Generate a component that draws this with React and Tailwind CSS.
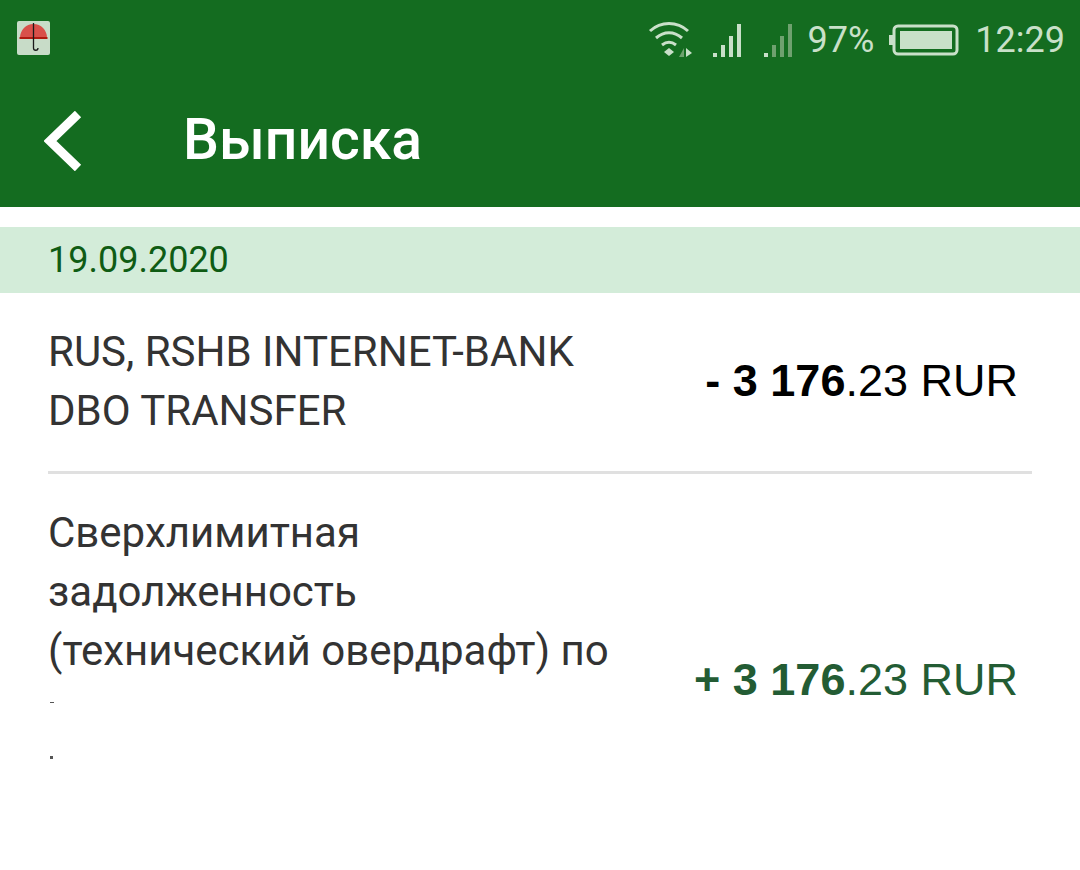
const Umbrella = () => (
  <svg width="33" height="34" viewBox="0 0 33 34" className="rounded-[2px] bg-[#c8dcc8]">
    <path d="M3 17 C3 9 9 3 16.5 3 C24 3 30 9 30 17 Z" fill="#d9504a" />
    <path d="M2.5 17 H30.5" stroke="#b01a10" strokeWidth="2" />
    <path d="M16.5 2 V27 C16.5 30 21 30 21 27" stroke="#1a1a1a" strokeWidth="1.3" fill="none" />
  </svg>
);

const Wifi = () => (
  <svg width="46" height="38" viewBox="0 0 46 38" fill="none" stroke="#c9e0c9" strokeWidth="3">
    <path d="M2 10 C13 0 29 0 40 10" />
    <path d="M8 17 C16 10 26 10 34 17" />
    <path d="M14 24 C19 20 23 20 28 24" />
    <path d="M16 31 L21 27 L26 31 L21 35 Z" fill="#c9e0c9" stroke="none" />
    <path d="M36 27 V36 L31 36 Z" fill="#6fa16f" stroke="none" />
    <path d="M38 27 V36 L44 32 Z" fill="#c9e0c9" stroke="none" />
  </svg>
);

const Signal = ({ dim }) => (
  <svg width="28" height="34" viewBox="0 0 28 34">
    <rect x="0" y="30" width="4" height="4" fill="#c9e0c9" />
    <rect x="8" y="22" width="4" height="12" fill={dim ? "#6fa16f" : "#c9e0c9"} />
    <rect x="16" y="13" width="4" height="21" fill={dim ? "#6fa16f" : "#c9e0c9"} />
    <rect x="24" y="1" width="4" height="33" fill={dim ? "#6fa16f" : "#c9e0c9"} />
  </svg>
);

const Battery = () => (
  <svg width="70" height="32" viewBox="0 0 70 32">
    <rect x="0" y="11" width="4" height="10" fill="#c9e0c9" />
    <rect x="5" y="2" width="63" height="28" rx="4" fill="none" stroke="#c9e0c9" strokeWidth="3" />
    <rect x="11" y="7" width="52" height="18" fill="#c9e0c9" />
  </svg>
);

function App() {
  return (
    <div className="w-[1080px] h-[870px] bg-white font-['Roboto',sans-serif] overflow-hidden">
      <header className="h-[207px] bg-[#146c20]">
        <div className="h-[76px] flex items-center pl-[17px] pr-[15px]">
          <Umbrella />
          <div className="ml-auto flex items-center text-[#c9e0c9] text-[36px] pt-[3px]">
            <Wifi />
            <div className="ml-[19px]"><Signal /></div>
            <div className="ml-[23px]"><Signal dim /></div>
            <span className="ml-[16px]">97%</span>
            <div className="ml-[15px]"><Battery /></div>
            <span className="ml-[16px]">12:29</span>
          </div>
        </div>
        <div className="h-[131px] flex items-start pl-[44px]">
          <svg width="38" height="60" viewBox="0 0 38 60" className="mt-[35px]" fill="none" stroke="#fff" strokeWidth="9">
            <path d="M34 3 L6 30 L34 57" />
          </svg>
          <h1 className="ml-[101px] mt-[30px] text-white text-[57px] font-medium leading-[68px]">Выписка</h1>
        </div>
      </header>

      <div className="mt-[20px] h-[66px] bg-[#d3ecd9] pl-[48px] flex items-center text-[#0f5c14] text-[36px]">19.09.2020</div>

      <div className="mx-[48px]">
        <div className="h-[181px] flex items-center justify-between border-b-[3px] border-[#e0e0e0] pr-[14px]">
          <div className="text-[#333] text-[42px] leading-[59px] -mt-[3px]">
            <div>RUS, RSHB INTERNET-BANK</div>
            <div>DBO TRANSFER</div>
          </div>
          <div className="font-['Liberation_Sans',sans-serif] text-[45px] text-black -mt-[2px]"><b>- 3 176</b>.23 RUR</div>
        </div>
        <div className="flex items-center justify-between pr-[14px] pt-[29px]">
          <div className="text-[#333] text-[42px] leading-[59px]">
            <div>Сверхлимитная</div>
            <div>задолженность</div>
            <div>(технический овердрафт) по</div>
            <div className="h-[59px] relative">
              <span className="absolute left-[2px] top-[22px] h-px w-[4px] bg-[#555]" />
            </div>
            <div className="h-[59px] relative">
              <span className="absolute left-[2px] top-[17px] h-[3px] w-[3px] bg-[#555]" />
            </div>
          </div>
          <div className="font-['Liberation_Sans',sans-serif] text-[45px] text-[#235c34] mt-[59px]"><b>+ 3 176</b>.23 RUR</div>
        </div>
      </div>
    </div>
  );
}

export default App;
